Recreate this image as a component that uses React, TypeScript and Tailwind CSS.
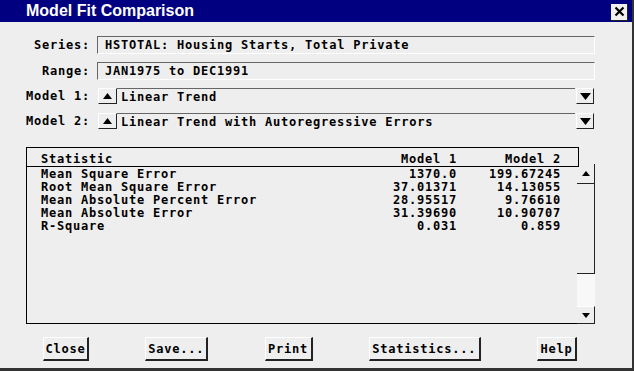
import React from 'react';

const mono = "font-['DejaVu_Sans_Mono',monospace]";

const rows = [
  ['Mean Square Error', '1370.0', '199.67245'],
  ['Root Mean Square Error', '37.01371', '14.13055'],
  ['Mean Absolute Percent Error', '28.95517', '9.76610'],
  ['Mean Absolute Error', '31.39690', '10.90707'],
  ['R-Square', '0.031', '0.859'],
];

function UpTri({ w = 9, h = 6 }: { w?: number; h?: number }) {
  return (
    <svg width={w} height={h} viewBox={`0 0 ${w} ${h}`}>
      <polygon points={`0,${h} ${w / 2},0 ${w},${h}`} fill="#000" />
    </svg>
  );
}

function DownTri({ w = 11, h = 7 }: { w?: number; h?: number }) {
  return (
    <svg width={w} height={h} viewBox={`0 0 ${w} ${h}`}>
      <polygon points={`0,0 ${w},0 ${w / 2},${h}`} fill="#000" />
    </svg>
  );
}

function Field({ label, value }: { label: string; value: string }) {
  return (
    <div className="flex h-[18px] items-center">
      <div className="w-[90px] text-right">{label}</div>
      <div className="ml-[7px] flex h-full w-[498px] items-center border-t border-l border-t-[#666] border-l-[#666] border-r border-b border-r-white border-b-white pl-[7px]">
        {value}
      </div>
    </div>
  );
}

function ModelRow({ label, value }: { label: string; value: string }) {
  return (
    <div className="flex h-[16px] items-center">
      <div className="w-[90px] text-right">{label}</div>
      <div className="ml-[8px] flex h-full w-[19px] items-center justify-center border-t border-l border-white border-r border-b border-r-[#222] border-b-[#222]">
        <UpTri />
      </div>
      <div className="flex h-full w-[458px] items-center border-t border-[#666] pl-[4px]">{value}</div>
      <div className="ml-[1px] flex h-[16px] w-[18px] items-center justify-center border-t border-l border-white border-r border-b border-r-[#222] border-b-[#222]">
        <DownTri />
      </div>
    </div>
  );
}

function Button({ label, w }: { label: string; w: string }) {
  return (
    <div
      className={`flex h-[24px] ${w} items-center justify-center border-t border-l border-white border-r-2 border-b-2 border-r-[#222] border-b-[#222] pt-[1px]`}
    >
      {label}
    </div>
  );
}

export default function App() {
  return (
    <div className={`flex h-[371px] w-[634px] flex-col overflow-hidden border-r-2 border-b-[3px] border-[#333] bg-[#eeeeee] text-[12px] leading-[14px] tracking-[0.78px] font-bold text-black ${mono}`}>
      {/* Title bar */}
      <div className="flex h-[22px] shrink-0 items-center bg-[#000080] pl-[26px] pr-[4px]">
        <span className="font-['Liberation_Sans',Arial,sans-serif] text-[16px] leading-[20px] tracking-normal font-bold text-white">
          Model Fit Comparison
        </span>
        <div className="mt-[2px] ml-auto flex h-[17px] w-[17px] items-center justify-center border-r border-b border-[#222] bg-[#f0f0f0]">
          <svg width="11" height="11" viewBox="0 0 11 11">
            <path d="M1.5 1.5 L9.5 9.5 M9.5 1.5 L1.5 9.5" stroke="#000" strokeWidth="2.2" />
          </svg>
        </div>
      </div>

      <div className="mt-[14px]">
        <Field label="Series:" value="HSTOTAL: Housing Starts, Total Private" />
      </div>
      <div className="mt-[8px]">
        <Field label="Range:" value="JAN1975 to DEC1991" />
      </div>
      <div className="mt-[8px]">
        <ModelRow label="Model 1:" value="Linear Trend" />
      </div>
      <div className="mt-[9px]">
        <ModelRow label="Model 2:" value="Linear Trend with Autoregressive Errors" />
      </div>

      {/* Statistics table */}
      <div className="mt-[18px] ml-[26px] w-[569px]">
        <div className="flex h-[20px] w-[553px] items-center border border-black pl-[14px] pr-[17px] pt-[3px]">
          <span className="flex-1">Statistic</span>
          <span className="w-[120px] text-right">Model 1</span>
          <span className="w-[104px] text-right">Model 2</span>
        </div>
        <div className="flex">
          <div className="h-[157px] w-[551px] border-l border-b border-black pr-[16px] pl-[14px] pt-[1px]">
            {rows.map(([name, m1, m2]) => (
              <div key={name} className="flex h-[13px] items-center leading-[13px]">
                <span className="flex-1">{name}</span>
                <span className="w-[120px] text-right">{m1}</span>
                <span className="w-[104px] text-right">{m2}</span>
              </div>
            ))}
          </div>
          {/* Scrollbar */}
          <div className="-mt-[3px] flex h-[160px] w-[18px] flex-col">
            <div className="flex h-[20px] items-center justify-center border-r border-b border-[#222]">
              <UpTri w={8} h={5} />
            </div>
            <div className="h-[90px] border-r border-b border-[#222]" />
            <div className="h-[32px] bg-[#f8f8f8]" />
            <div className="flex h-[18px] items-center justify-center border-t border-white border-r border-b border-r-[#222] border-b-[#222]">
              <DownTri w={8} h={5} />
            </div>
          </div>
        </div>
      </div>

      {/* Buttons */}
      <div className="mt-[13px] flex justify-between pl-[43px] pr-[55px]">
        <Button label="Close" w="w-[46px]" />
        <Button label="Save..." w="w-[63px]" />
        <Button label="Print" w="w-[48px]" />
        <Button label="Statistics..." w="w-[112px]" />
        <Button label="Help" w="w-[40px]" />
      </div>
    </div>
  );
}
